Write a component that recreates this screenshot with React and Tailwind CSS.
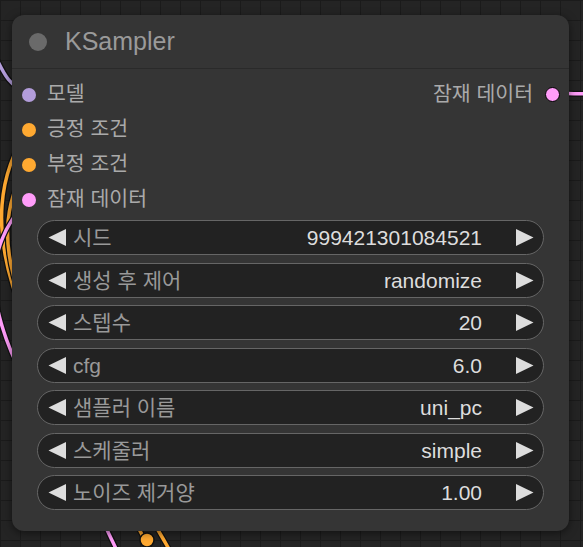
import React from "react";

const inputs = [
  { label: "모델", color: "bg-[#b39ddb]" },
  { label: "긍정 조건", color: "bg-[#ffa931]" },
  { label: "부정 조건", color: "bg-[#ffa931]" },
  { label: "잠재 데이터", color: "bg-[#ff9cf9]" },
];

const widgets = [
  { label: "시드", value: "999421301084521" },
  { label: "생성 후 제어", value: "randomize" },
  { label: "스텝수", value: "20" },
  { label: "cfg", value: "6.0" },
  { label: "샘플러 이름", value: "uni_pc" },
  { label: "스케줄러", value: "simple" },
  { label: "노이즈 제거양", value: "1.00" },
];

const Arrow = ({ dir }) => (
  <svg width="19" height="19" viewBox="0 0 19 19" className="shrink-0">
    {dir === "left" ? (
      <polygon points="0.5,9.5 18,1 18,18" fill="#dddddd" />
    ) : (
      <polygon points="1,1 18.5,9.5 1,18" fill="#dddddd" />
    )}
  </svg>
);

const Wires = () => (
  <svg className="absolute inset-0" width="583" height="547" viewBox="0 0 583 547">
    <g fill="none" strokeLinecap="round">
      <path d="M -20 30 C 0 55, 0 85, 29 93" stroke="#111" strokeWidth="6" />
      <path d="M -20 30 C 0 55, 0 85, 29 93" stroke="#b39ddb" strokeWidth="3.5" />

      <path d="M 160 570 C 90 420, -60 260, 29 128" stroke="#111" strokeWidth="6" />
      <path d="M 160 570 C 90 420, -60 260, 29 128" stroke="#ffa931" strokeWidth="3.5" />

      <path d="M 180 570 C 110 430, -50 280, 29 163" stroke="#111" strokeWidth="6" />
      <path d="M 180 570 C 110 430, -50 280, 29 163" stroke="#ffa931" strokeWidth="3.5" />

      <path d="M 125 570 C 70 430, -70 300, 29 199" stroke="#111" strokeWidth="6" />
      <path d="M 125 570 C 70 430, -70 300, 29 199" stroke="#ff9cf9" strokeWidth="3.5" />

      <path d="M 553 93 C 570 93, 575 95, 600 93" stroke="#111" strokeWidth="6" />
      <path d="M 553 93 C 570 93, 575 95, 600 93" stroke="#ff9cf9" strokeWidth="3.5" />
    </g>
    <circle cx="147" cy="540" r="7" fill="#ffa931" stroke="#111" strokeWidth="1.5" />
  </svg>
);

export default function App() {
  return (
    <div className="relative w-[583px] h-[547px] overflow-hidden bg-[#242424] bg-[linear-gradient(#1b1b1b_1px,transparent_1px),linear-gradient(90deg,#1b1b1b_1px,transparent_1px)] bg-[size:20px_20px] pt-[15px] pl-[12px] font-['Liberation_Sans','Noto_Sans_CJK_KR',sans-serif]">
      <Wires />

      <div className="relative w-[557px] h-[516px] rounded-[12px] bg-[#353535] shadow-[0_2px_8px_rgba(0,0,0,0.5)] flex flex-col">
        {/* title */}
        <div className="h-[54px] flex items-center pl-[17px] gap-[18px] border-b border-[#2a2a2a] shrink-0">
          <div className="size-[18px] rounded-full bg-[#6a6a6a]" />
          <span className="text-[25px] text-[#9a9a9a] leading-none">KSampler</span>
        </div>

        {/* slots */}
        <div className="relative pt-[8px] flex flex-col">
          {inputs.map((slot) => (
            <div key={slot.label} className="h-[35px] flex items-center pl-[10px] gap-[11px]">
              <div className={`size-[14px] rounded-full ${slot.color}`} />
              <span className="text-[20.5px] text-[#aaaaaa] leading-none">{slot.label}</span>
            </div>
          ))}

          <div className="absolute top-[8px] right-[9px] h-[35px] flex items-center gap-[12px]">
            <span className="text-[20.5px] text-[#aaaaaa] leading-none">잠재 데이터</span>
            <div className="size-[15px] rounded-full bg-[#ff9cf9] border-[1.5px] border-black" />
          </div>
        </div>

        {/* widgets */}
        <div className="flex flex-col gap-[7.5px] px-[25px] mt-[3px]">
          {widgets.map((w) => (
            <div
              key={w.label}
              className="h-[35px] flex items-center rounded-full bg-[#222222] border-[1.5px] border-[#666666] pl-[10px] pr-[9px]"
            >
              <Arrow dir="left" />
              <span className="ml-[6px] text-[21px] text-[#999999] leading-none">{w.label}</span>
              <span className="ml-auto text-[21px] text-[#dddddd] leading-none">{w.value}</span>
              <div className="ml-[33px]">
                <Arrow dir="right" />
              </div>
            </div>
          ))}
        </div>
      </div>
    </div>
  );
}
